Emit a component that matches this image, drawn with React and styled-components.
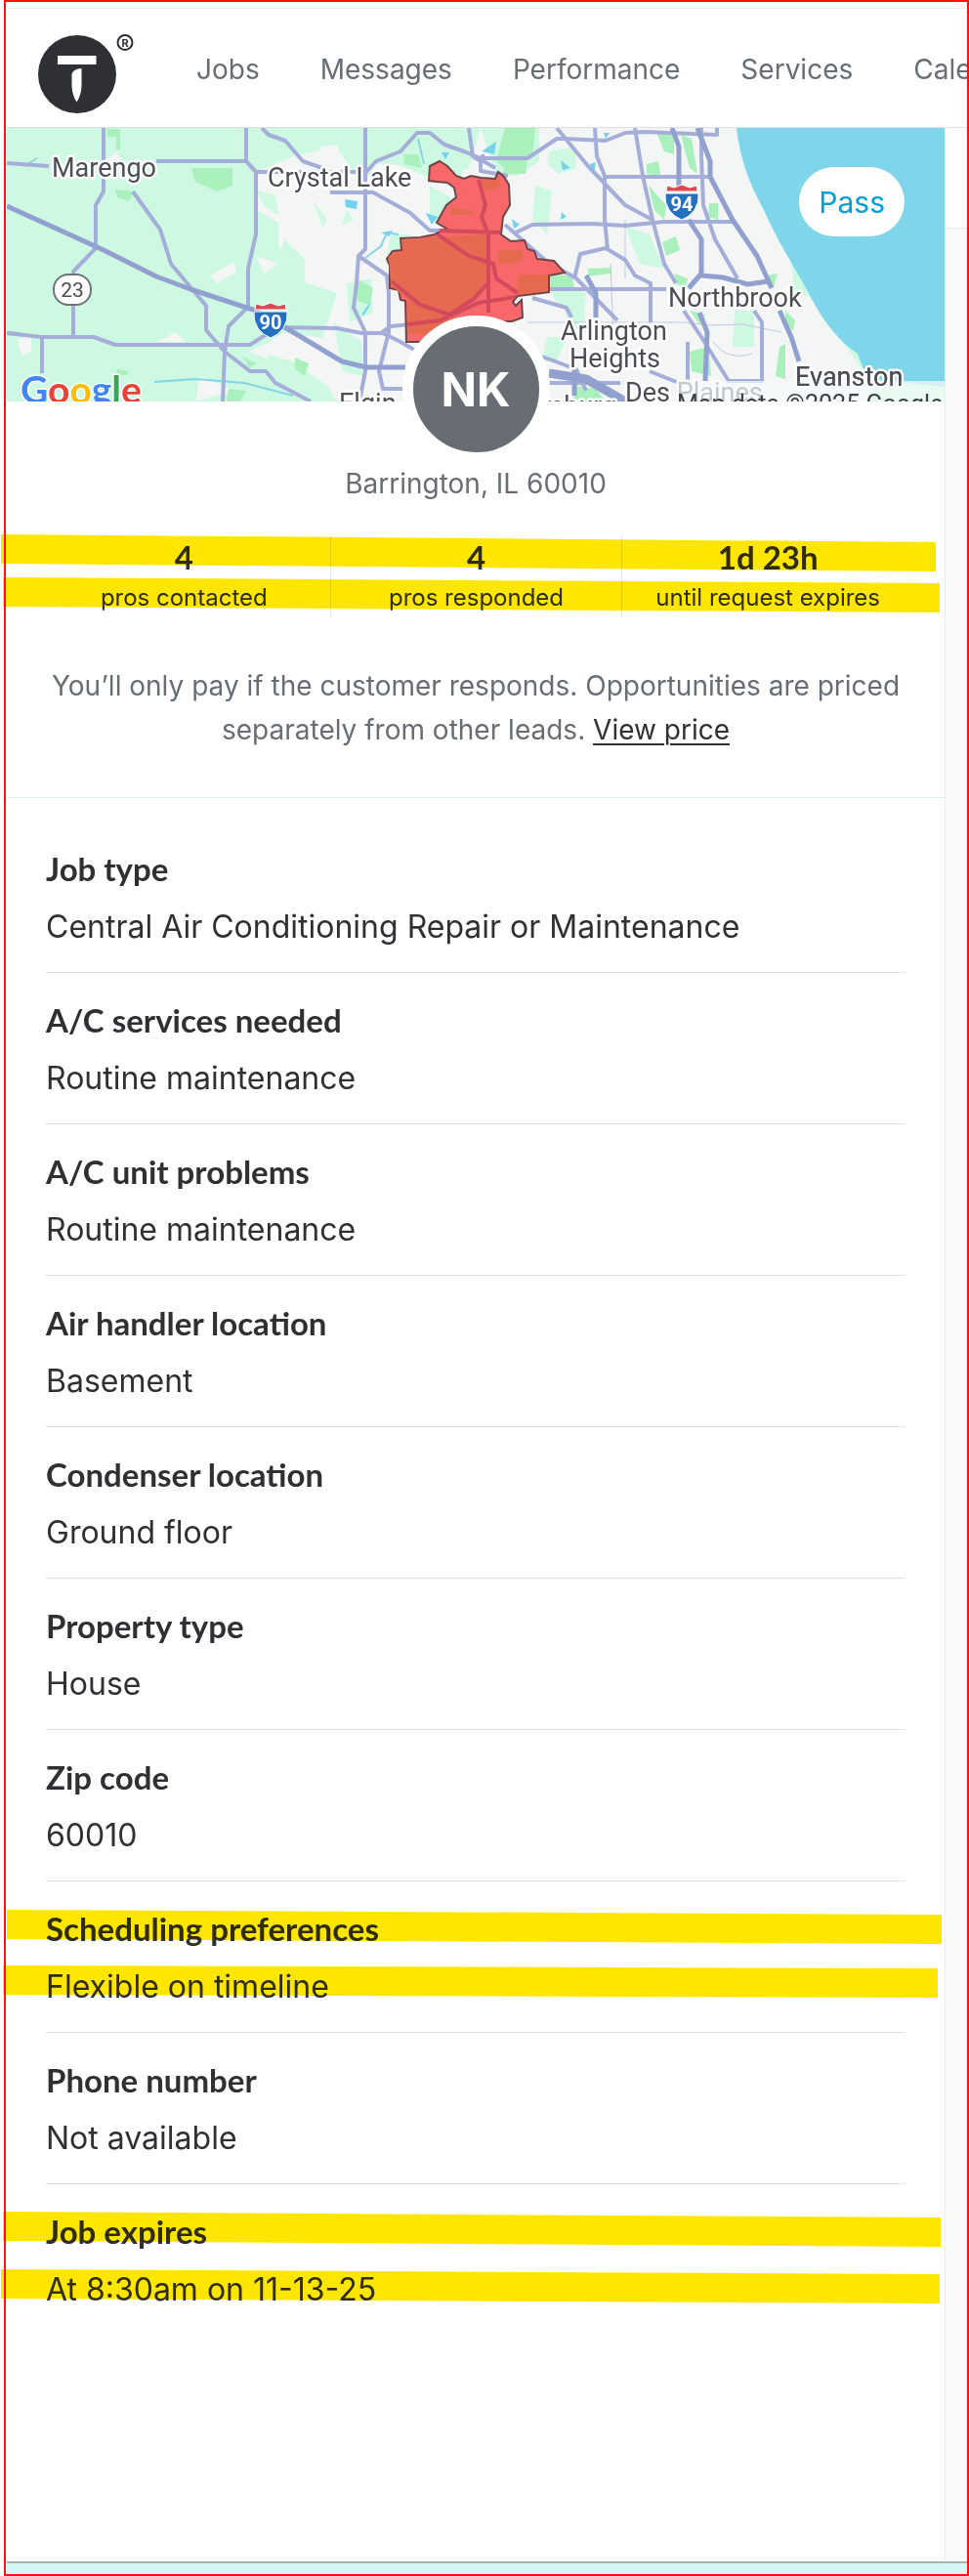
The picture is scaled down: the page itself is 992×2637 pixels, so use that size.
import React from 'react';
import styled, { createGlobalStyle } from 'styled-components';

const GlobalStyle = createGlobalStyle`
	* {
		box-sizing: border-box;
	}

	body {
		margin: 0;
		background: #fff;
		color: #2f3033;
		font-family: Inter, 'Open Sans', sans-serif;
	}

	p, dl, dt, dd, ul {
		margin: 0;
		padding: 0;
	}
`;

const Frame = styled.div`
	position: relative;
	display: flex;
	flex-direction: column;
	min-height: 100vh;
	margin-left: 4px;
	padding: 0 2px 0 3px;
	background: #fff;

	&::after {
		content: '';
		position: absolute;
		inset: 0;
		border: 2px solid #ff1111;
		pointer-events: none;
	}
`;

const Strip = styled.div`
	height: 9px;
	border-bottom: 1px solid #ececec;
`;

const Header = styled.header`
	display: flex;
	align-items: center;
	gap: 63px;
	height: 122px;
	padding: 2px 0 0 31px;
	border-bottom: 1px solid #dedfe1;
	overflow: hidden;
`;

const Logo = styled.svg`
	flex: none;
	align-self: flex-end;
	width: 100px;
	height: 84px;
	margin-bottom: 12px;
`;

const NavList = styled.ul`
	display: flex;
	gap: 62px;
	list-style: none;
`;

const NavLink = styled.a`
	color: #676d73;
	font-size: 28px;
	line-height: 40px;
	text-decoration: none;
	white-space: nowrap;
`;

const Body = styled.div`
	display: flex;
	flex: 1;
`;

const Card = styled.main`
	flex: 1;
	min-width: 0;
	background: #fff;
`;

const Side = styled.aside`
	flex: none;
	width: 23px;
	background: #fafafa;
	border-left: 1px solid #ededee;
`;

const SideTop = styled.div`
	height: 103px;
	background: #fff;
	border-bottom: 1px solid #e9eced;
`;

const MapArea = styled.section`
	position: relative;
	height: 280px;
	overflow: hidden;
`;

const MapDrawing = styled.svg`
	display: block;
	width: 100%;
	height: 100%;
`;

const PassButton = styled.button`
	position: absolute;
	top: 40px;
	right: 41px;
	height: 71px;
	padding: 0 20px;
	border: 0;
	border-radius: 36px;
	background: #fff;
	color: #009fd9;
	font-family: inherit;
	font-size: 30px;
`;

const Summary = styled.section`
	display: flex;
	flex-direction: column;
	align-items: center;
	padding: 0 32px 46px;
	border-bottom: 1px solid #e0f0f0;
`;

const Avatar = styled.div`
	position: relative;
	display: flex;
	align-items: center;
	justify-content: center;
	width: 151px;
	height: 151px;
	margin-top: -88px;
	border: 11px solid #fff;
	border-radius: 50%;
	background: #676d73;
	color: #fff;
	font-size: 48px;
	font-weight: 700;
`;

const Place = styled.p`
	color: #676d73;
	font-size: 28px;
	line-height: 42px;
`;

const Stats = styled.dl`
	position: relative;
	display: grid;
	grid-template-columns: repeat(3, 1fr);
	align-self: stretch;
	margin-top: 32px;
`;

const Stat = styled.div`
	display: flex;
	flex-direction: column-reverse;
	text-align: center;

	& + & {
		border-left: 1px solid #e3e5e7;
	}
`;

const StatLabel = styled.dt`
	font-size: 24px;
	line-height: 40px;
`;

const StatValue = styled.dd`
	font-family: Lato, sans-serif;
	font-size: 33px;
	font-weight: 700;
	line-height: 44px;
`;

// marker stroke, drawn over the text and slanting down to the right
const Marker = styled.span`
	position: absolute;
	top: ${props => props.$top}px;
	left: ${props => props.$left}px;
	right: ${props => props.$right}px;
	height: ${props => 30 + props.$slope}px;
	background: #ffe600;
	mix-blend-mode: multiply;
	pointer-events: none;
	clip-path: polygon(
		0 0,
		100% ${props => props.$slope}px,
		100% 100%,
		0 calc(100% - ${props => props.$slope}px)
	);
`;

const Note = styled.p`
	margin-top: 48px;
	color: #676d73;
	font-size: 28px;
	line-height: 45px;
	text-align: center;
`;

const PriceLink = styled.a`
	color: #2f3033;
	text-decoration: underline;
	text-decoration-thickness: 2px;
	text-underline-offset: 4px;
`;

const Details = styled.dl`
	padding: 24px 40px 0;
`;

const Row = styled.div`
	position: relative;
	padding: 26px 0 24px;
	border-bottom: 1px solid #dfe1e4;

	&:last-child {
		border-bottom: 0;
	}
`;

const RowLabel = styled.dt`
	font-family: Lato, sans-serif;
	font-size: 33px;
	font-weight: 700;
	line-height: 44px;
`;

const RowValue = styled.dd`
	margin-top: 16px;
	font-size: 32px;
	line-height: 44px;
`;

const BottomBar = styled.footer`
	height: 15px;
	background: #d3f6f6;
	border-top: 2px solid #a3b5b5;
`;

const navItems = ['Jobs', 'Messages', 'Performance', 'Services', 'Calendar'];

const stats = [
	{ label: 'pros contacted', value: '4' },
	{ label: 'pros responded', value: '4' },
	{ label: 'until request expires', value: '1d 23h' }
];

const details = [
	{ label: 'Job type', value: 'Central Air Conditioning Repair or Maintenance' },
	{ label: 'A/C services needed', value: 'Routine maintenance' },
	{ label: 'A/C unit problems', value: 'Routine maintenance' },
	{ label: 'Air handler location', value: 'Basement' },
	{ label: 'Condenser location', value: 'Ground floor' },
	{ label: 'Property type', value: 'House' },
	{ label: 'Zip code', value: '60010' },
	{
		label: 'Scheduling preferences',
		value: 'Flexible on timeline',
		markers: [
			{ top: 29, left: -40, right: -37, slope: 5 },
			{ top: 86, left: -44, right: -33, slope: 3 }
		]
	},
	{ label: 'Phone number', value: 'Not available' },
	{
		label: 'Job expires',
		value: 'At 8:30am on 11-13-25',
		markers: [
			{ top: 28, left: -44, right: -36, slope: 6 },
			{ top: 87, left: -46, right: -35, slope: 5 }
		]
	}
];

const Markers = ({ list }) =>
	list.map(({ top, left, right, slope }) => (
		<Marker key={top} $top={top} $left={left} $right={right} $slope={slope} />
	));

const BrandLogo = () => (
	<Logo viewBox='38 34 100 84' role='img' aria-label='Home'>
		<circle cx='79' cy='76' r='40' fill='#2f3033' />
		<path d='M59 57H98.500V66H59Z' fill='#fff' />
		<path d='M73.500 76Q75 70.500 83.500 70V88Q83 98 78.500 104.500Q74 98 73.500 88Z' fill='#fff' />
		<circle cx='128' cy='43.500' r='7.500' fill='none' stroke='#2f3033' strokeWidth='2' />
		<text x='128' y='47.500' textAnchor='middle' fontSize='11' fontWeight='700' fill='#2f3033'>
			R
		</text>
	</Logo>
);

const Shield = ({ x, y, number }) => (
	<g transform={`translate(${x} ${y})`}>
		<path d='M-15 0L-8 2L0 -1L8 2L15 0L16 6H-16Z' fill='#e0484e' stroke='#fff' strokeWidth='1' />
		<path d='M-17 8H17Q18 17 13 25Q8 32 0 35Q-8 32 -13 25Q-18 17 -17 8Z' fill='#2471c4' stroke='#fff' strokeWidth='1' />
		<text y='26' textAnchor='middle' fontSize='20' fontWeight='700' fill='#fff'>
			{number}
		</text>
	</g>
);

const towns = [
	{ name: 'Marengo', x: 53, y: 181 },
	{ name: 'Crystal Lake', x: 274, y: 191 },
	{ name: 'Northbrook', x: 684, y: 314 },
	{ name: 'Arlington', x: 574, y: 348 },
	{ name: 'Heights', x: 583, y: 376 },
	{ name: 'Evanston', x: 814, y: 395 },
	{ name: 'Elgin', x: 347, y: 422 },
	{ name: 'Schaumburg', x: 479, y: 425 },
	{ name: 'Des Plaines', x: 640, y: 411 }
];

const AreaMap = () => (
	<MapDrawing
		viewBox='7 131 960 280'
		preserveAspectRatio='xMidYMid slice'
		role='img'
		aria-label='Map of the Barrington area'
	>
		<rect x='7' y='131' width='960' height='280' fill='#cdf8e2' />

		{/* built-up land */}
		<g fill='#f3f6f5'>
			<path d='M262 176L300 160L345 150L370 190L385 168L440 170L470 200L480 131H790L830 411H345L335 395L300 370L262 360L290 340L330 346L345 300L300 285L285 250L285 228L262 215Z' />
			<path d='M788 290L832 305L892 392L892 411H788Z' />
			<path d='M215 282L240 268L242 278L222 290Z M262 262L285 270L270 280Z M160 350L180 340L190 350Z M18 348L32 342L32 360L22 364Z M106 165L120 155L124 165Z M255 360L270 352L275 368Z M328 150L345 148L350 168L330 170Z M205 385L240 400L200 411Z' />
		</g>
		<g fill='#cdf8e2'>
			<path d='M385 131H492L480 172L440 182L400 165Z M440 190L468 206L455 235L440 225Z M400 240H420L410 270H395Z M492 131H552V165L530 180L508 178Z M562 155L590 150V172L572 178L560 168Z M355 290L380 285L382 320L358 330Z M290 245L285 275L268 300L285 310L312 300V265Z M640 232L665 240L680 275L655 270Z M548 190L565 195L560 240L545 225Z M560 290L600 300L598 325L570 310Z M342 330L370 350L372 385L350 380Z M262 195L282 200L285 220L270 210Z M320 205L335 225L330 232Z M355 215L362 225L350 230Z M560 345H580L570 370H555Z M575 296H595L600 340H582Z M752 318H772V355H750Z' />
		</g>
		<g fill='#a9f0bd'>
			<path d='M517 131H548L545 160L520 175L508 165Z M520 165L540 160L538 178H514Z M196 172H238V190L222 196L200 186Z M110 132H123V153H119V140H110Z M118 194L137 196L132 206L120 202Z M365 285L382 295L378 312L366 308Z M413 158H428L432 172L414 168Z M672 135L690 138V158L680 155Z M697 138L708 142L714 178L706 172Z M662 168L674 165L676 180L662 178Z M664 190L682 210L680 225L670 215Z M678 248L692 242L696 256L682 262Z M726 208H735V225L725 222Z M690 280L704 285L702 295L694 292Z M785 282L796 280L792 294Z M562 280L586 283L588 295H564Z M602 275L625 274V280L602 283Z M706 360L725 355L728 385L708 380Z M706 318L722 322L716 332Z M302 366L316 372L312 385L302 378Z M590 395L610 398L620 411H586Z M234 398L252 400L246 411H232Z M120 378L132 380L130 384H118Z M804 318L814 328L812 338L804 334Z M798 355L804 352V388L794 385Z M248 365L262 372L256 377Z' />
		</g>

		{/* lake and ponds */}
		<path
			d='M754 131C758 165 768 190 782 215C800 255 815 275 832 308C845 332 860 350 878 362L888 388L967 396V131Z'
			fill='#7fd5ea'
		/>
		<path
			d='M493 155L508 145L506 158Z M452 156H460L456 163Z M353 204L366 206L365 214L354 212Z M390 238L402 236L398 242Z M574 164L584 172L576 174Z M604 168L610 166L608 178Z M618 136H624L620 142Z M575 217L580 222L574 225Z M524 224L532 230L526 234Z M370 322L380 308L378 314L372 323Z M436 218L448 222L442 230Z'
			fill='#74d2ec'
		/>
		<g fill='none' stroke='#86d4e6' strokeWidth='2'>
			<path d='M374 264L390 252L396 238L408 240' />
			<path d='M428 142L434 168 M25 170L38 162 M158 391L200 388L250 392L300 405' />
		</g>

		{/* local roads */}
		<g fill='none' stroke='#c2c7e0' strokeWidth='1'>
			<path d='M540 330H700L725 333L760 332L800 340 M625 270L628 345 M640 225V285 M730 350Q745 370 770 362' />
		</g>
		<g fill='none' stroke='#a5aed9' strokeWidth='4' strokeLinejoin='round'>
			<path d='M106 131V196L98 210V254L75 278V344' />
			<path d='M7 167L50 170 M160 165H252L262 176H375L385 165L410 155L427 136H440L455 148L475 155L492 162H540L570 142L578 142L620 144L640 136L660 135L734 138V131' />
			<path d='M252 131V165L262 176V240L254 275V314L234 334L230 360L228 411' />
			<path d='M268 131L275 138L292 144L310 165L330 172' />
			<path d='M374 131V255L367 262L365 290L362 315L374 340V380L368 411' />
			<path d='M367 262L396 282L398 300V340L388 380L392 398H412' />
			<path d='M136 196L164 235L175 270L195 294L211 313V338L230 360L256 380H272L282 392L318 411' />
			<path d='M7 341L42 345H96L118 353H256L284 335L345 336L370 341H392L410 350L424 358 M43 345V382' />
			<path d='M338 197H382L420 218L440 236H512' />
			<path d='M390 341L400 334L440 330' />
			<path d='M480 131L484 160L492 165L492 175L520 180' />
			<path d='M609 131L611 160L619 180V225L622 255' />
			<path d='M570 131L602 170L640 210L668 225' />
			<path d='M650 131L658 180L668 225L672 240L680 270L692 290' />
			<path d='M619 181H727 M526 239L545 230L605 229L640 231L680 227H752' />
			<path d='M507 172L495 165L494 158 M517 230L560 268L590 285L632 328' />
			<path d='M588 285L594 260L620 254L640 266L650 282L666 290V330' />
			<path d='M562 296H600H682 M545 305L580 315L585 325' />
			<path d='M718 131V160L720 210L732 245L755 285' />
			<path d='M700 318L718 345L746 390H780V330L772 318 M704 350V390' />
			<path d='M555 365L590 378L600 400 M562 392H635 M665 380L695 392' />
			<path d='M7 341L20 342' />
		</g>
		<g fill='none' stroke='#91a0cf' strokeWidth='5' strokeLinejoin='round'>
			<path d='M7 211L60 235L106 256L160 283L195 296L262 318L300 340L350 370L375 376H415' />
			<path d='M688 131L695 150V195 M705 225L718 245V280L705 295 M718 282L740 284L765 291L787 288' />
			<path d='M714 131L727 165V181L750 225L775 262L790 295' />
			<path d='M600 282L610 300V325 M798 318L810 345L818 370' />
			<path d='M716 320L724 340L722 390' />
			<path d='M562 382L600 388L640 411' strokeWidth='9' />
			<path d='M588 378V405' />
		</g>

		{/* service area */}
		<path
			d='M440 170L450 165L458 170L467 180L475 183L482 180L493 182L507 183L510 176L516 181L521 189L522 210L515 222L513 240L523 247L537 246L540 255L547 257L550 265L567 267L578 279L562 282V299L530 303L525 309L528 313L534 307L535 325L524 329L500 329L480 350L416 350L415 308L410 307L408 297L399 295V272L396 265L402 257L411 256L410 244L430 243L445 240L457 234L447 228L457 210L467 202L465 192L458 187L447 186L439 185Z'
			fill='#f8686a'
			stroke='#6e4648'
			strokeWidth='2'
		/>
		<g fill='#e56a50'>
			<path d='M398 262L412 257V245L440 243L500 240V280L490 300L470 320L455 342H417V306L400 292Z' />
			<path d='M493 184H509L514 190L500 196L492 192Z M510 256H535V265L528 270H510Z M530 281H561V298L530 302Z M462 212L485 216V220H462Z' />
		</g>
		<g fill='none' stroke='#d34a5c' strokeWidth='4'>
			<path d='M490 184L497 210L493 222L500 240V320 M450 236L512 238 M448 240L480 262L505 270L508 285L530 300' />
			<path d='M401 288L430 312L460 322L485 306L499 290 M417 332L450 328L490 310L528 304' />
		</g>

		<g fontFamily='Roboto, sans-serif'>
			<g
				fill='#4b4e54'
				stroke='#fff'
				strokeWidth='5'
				strokeLinejoin='round'
				paintOrder='stroke'
				fontSize='27'
			>
				{towns.map(({ name, x, y }) => (
					<text key={name} x={x} y={y}>
						{name}
					</text>
				))}
			</g>
			<path d='M694 390H967V411H694Z' fill='#f5fbfb' fillOpacity='.7' />
			<text x='814' y='395' fontSize='27' fill='#4b4e54' aria-hidden='true'>
				Evanston
			</text>
			<text x='693' y='422' fontSize='25' fill='#3c4043'>
				Map data ©2025 Google
			</text>
			<rect x='55' y='281' width='38' height='31' rx='15' fill='#fff' stroke='#6f7277' strokeWidth='2' />
			<text x='74' y='304' textAnchor='middle' fontSize='21' fill='#4b4e54'>
				23
			</text>
			<Shield x={277} y={311} number='90' />
			<Shield x={698} y={190} number='94' />
		</g>
		<text
			x='21'
			y='413'
			fontFamily='Lato, sans-serif'
			fontSize='39'
			fontWeight='700'
			stroke='#fff'
			strokeWidth='3'
			paintOrder='stroke'
		>
			<tspan fill='#4285f4'>G</tspan>
			<tspan fill='#ea4335'>o</tspan>
			<tspan fill='#fbbc05'>o</tspan>
			<tspan fill='#4285f4'>g</tspan>
			<tspan fill='#34a853'>l</tspan>
			<tspan fill='#ea4335'>e</tspan>
		</text>
	</MapDrawing>
);

const App = () => (
	<>
		<GlobalStyle />
		<Frame>
			<Strip />
			<Header>
				<BrandLogo />
				<nav>
					<NavList>
						{navItems.map(item => (
							<li key={item}>
								<NavLink href='#'>{item}</NavLink>
							</li>
						))}
					</NavList>
				</nav>
			</Header>
			<Body>
				<Card>
					<MapArea>
						<AreaMap />
						<PassButton type='button'>Pass</PassButton>
					</MapArea>
					<Summary>
						<Avatar>NK</Avatar>
						<Place>Barrington, IL 60010</Place>
						<Stats>
							{stats.map(({ label, value }) => (
								<Stat key={label}>
									<StatLabel>{label}</StatLabel>
									<StatValue>{value}</StatValue>
								</Stat>
							))}
							<Marker $top={-1} $left={-38} $right={-23} $slope={8} />
							<Marker $top={43} $left={-36} $right={-27} $slope={6} />
						</Stats>
						<Note>
							You’ll only pay if the customer responds. Opportunities are priced
							separately from other leads.{' '}
							<PriceLink href='#'>View price</PriceLink>
						</Note>
					</Summary>
					<Details>
						{details.map(({ label, value, markers }) => (
							<Row key={label}>
								<RowLabel>{label}</RowLabel>
								<RowValue>{value}</RowValue>
								{markers && <Markers list={markers} />}
							</Row>
						))}
					</Details>
				</Card>
				<Side>
					<SideTop />
				</Side>
			</Body>
			<BottomBar />
		</Frame>
	</>
);

export default App;
